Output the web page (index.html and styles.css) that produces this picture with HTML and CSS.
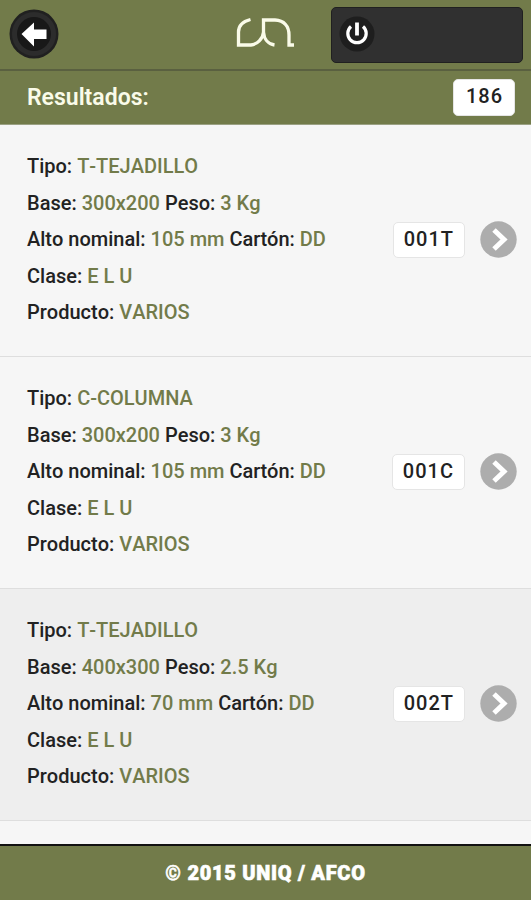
FILE: index.html
```html
<!DOCTYPE html>
<html lang="es">
<head>
    <meta charset="UTF-8">
    <meta name="viewport" content="width=device-width, initial-scale=1.0">
    <title>Resultados</title>
    <link rel="stylesheet" href="styles.css">
</head>
<body>
    <header class="header">
        <a href="#" class="back-button">
            <svg width="50" height="50" viewBox="0 0 50 50">
                <circle cx="25" cy="25" r="24.5" fill="#202020"/>
                <circle cx="25" cy="25" r="22" fill="#2c2c2c"/>
                <circle cx="25" cy="25" r="17" fill="#181818"/>
                <path d="M12.5 25 L25 13.5 V20.500 H37.5 V30 H25 V37.500 Z" fill="#fff"/>
            </svg>
        </a>
        <svg class="logo" width="60" height="34" viewBox="0 0 60 34">
            <path d="M15.5 4.5 C7.5 6.5 3.5 10.5 3.5 17 V30 H16 C22 29.5 28 24 28.500 17 V5 H40 C49 5.500 54 11 54 20 V30 H59 M28.500 17 C29 24 33 29 39.500 30" fill="none" stroke="#fafbe9" stroke-width="3.300"/>
        </svg>
        <a href="#" class="power-button">
            <svg width="36" height="36" viewBox="0 0 36 36">
                <circle cx="18" cy="18" r="17.500" fill="#1e1e1e"/>
                <path d="M12 10.500 A9.200 9.200 0 1 0 24 10.500" fill="none" stroke="#fff" stroke-width="3.200"/>
                <path d="M18 6.500 V19.500" stroke="#fff" stroke-width="3.800"/>
            </svg>
        </a>
    </header>

    <div class="results-bar">
        <h1>Resultados:</h1>
        <span class="count total">186</span>
    </div>

    <ul class="results">
        <li class="item">
            <div class="info">
                <p>Tipo: <b>T-TEJADILLO</b></p>
                <p>Base: <b>300x200</b> Peso: <b>3 Kg</b></p>
                <p>Alto nominal: <b>105 mm</b> Cartón: <b>DD</b></p>
                <p>Clase: <b>E L U</b></p>
                <p>Producto: <b>VARIOS</b></p>
            </div>
            <span class="count">001T</span>
            <svg class="arrow" width="37" height="37" viewBox="0 0 37 37">
                <circle cx="18.500" cy="18.500" r="18.200" fill="#adadad"/>
                <path d="M14 9 L24 18.500 L14 28" fill="none" stroke="#fff" stroke-width="5"/>
            </svg>
        </li>
        <li class="item">
            <div class="info">
                <p>Tipo: <b>C-COLUMNA</b></p>
                <p>Base: <b>300x200</b> Peso: <b>3 Kg</b></p>
                <p>Alto nominal: <b>105 mm</b> Cartón: <b>DD</b></p>
                <p>Clase: <b>E L U</b></p>
                <p>Producto: <b>VARIOS</b></p>
            </div>
            <span class="count">001C</span>
            <svg class="arrow" width="37" height="37" viewBox="0 0 37 37">
                <circle cx="18.500" cy="18.500" r="18.200" fill="#adadad"/>
                <path d="M14 9 L24 18.500 L14 28" fill="none" stroke="#fff" stroke-width="5"/>
            </svg>
        </li>
        <li class="item active">
            <div class="info">
                <p>Tipo: <b>T-TEJADILLO</b></p>
                <p>Base: <b>400x300</b> Peso: <b>2.5 Kg</b></p>
                <p>Alto nominal: <b>70 mm</b> Cartón: <b>DD</b></p>
                <p>Clase: <b>E L U</b></p>
                <p>Producto: <b>VARIOS</b></p>
            </div>
            <span class="count">002T</span>
            <svg class="arrow" width="37" height="37" viewBox="0 0 37 37">
                <circle cx="18.500" cy="18.500" r="18.200" fill="#adadad"/>
                <path d="M14 9 L24 18.500 L14 28" fill="none" stroke="#fff" stroke-width="5"/>
            </svg>
        </li>
    </ul>

    <footer class="footer">© 2015 UNIQ / AFCO</footer>
</body>
</html>
```
FILE: styles.css
```css
* {
    box-sizing: border-box;
}

body {
    margin: 0;
    height: 900px;
    display: flex;
    flex-direction: column;
    overflow: hidden;
    background-color: #f6f6f6;
    color: #222;
    font-family: Roboto, "Liberation Sans", sans-serif;
    font-kerning: none;
}

svg {
    display: block;
}

.header {
    display: flex;
    align-items: flex-start;
    height: 71px;
    padding: 7px 8px 0 9px;
    background-color: #727b4a;
    border-bottom: 2px solid #5a6040;
}

.back-button {
    margin-top: 2px;
}

.logo {
    margin: 8px 0 0 176px;
}

.power-button {
    width: 192px;
    height: 56px;
    margin-left: auto;
    padding: 8px 7px;
    background-color: #303030;
    border: 1px solid #202020;
    border-radius: 5px;
}

.results-bar {
    display: flex;
    align-items: center;
    justify-content: space-between;
    height: 54px;
    padding: 0 16px 0 27px;
    background-color: #727b4a;
    border-bottom: 1px solid #9ba183;
}

.results-bar h1 {
    margin: 0;
    font-size: 23px;
    font-weight: 600;
    color: #fafbe9;
}

.count {
    height: 36px;
    padding: 0 10px;
    background-color: #fff;
    border: 1px solid #e5e5e5;
    border-radius: 5px;
    font-size: 20px;
    font-weight: 500;
    line-height: 33px;
    letter-spacing: 1px;
}

.total {
    height: 37px;
    padding: 0 11px 0 12px;
}

.results {
    flex: 1;
    margin: 0;
    padding: 0;
    list-style: none;
}

.item {
    display: flex;
    align-items: center;
    height: 232px;
    padding: 0 14px 2px 27px;
    border-bottom: 1px solid #dedede;
}

.active {
    background-color: #eee;
}

.info {
    flex: 1;
}

.info p {
    margin: 0;
    font-size: 20px;
    font-weight: 500;
    line-height: 36.4px;
}

.info b {
    font-weight: 500;
    color: #727b4a;
}

.arrow {
    margin-left: 15px;
}

.footer {
    height: 56px;
    border-top: 2px solid #111;
    background-color: #727b4a;
    color: #fff;
    font-size: 20px;
    font-weight: 900;
    line-height: 54px;
    letter-spacing: 0.7px;
    text-align: center;
    -webkit-text-stroke: 0.6px #fff;
}
```
